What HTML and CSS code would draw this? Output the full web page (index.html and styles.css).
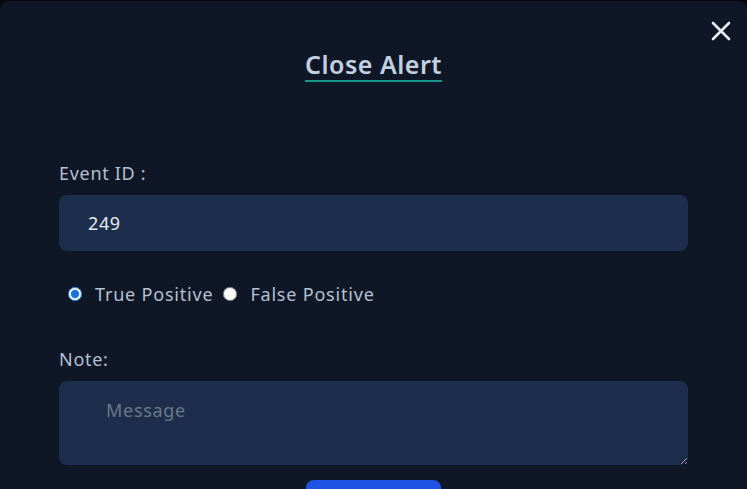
FILE: index.html
```html
<!DOCTYPE html>
<html>
<head>
<meta charset="utf-8">
<link rel="stylesheet" href="styles.css">
</head>
<body>
<div class="modal">
  <button class="close" aria-label="Close">
    <svg width="20" height="20" viewBox="0 0 20 20"><path d="M2 2 L18 18 M18 2 L2 18" stroke="#e8edf5" stroke-width="2.6" stroke-linecap="round"/></svg>
  </button>
  <h2 class="title"><span>Close Alert</span></h2>
  <form class="form">
    <label class="label">Event ID :</label>
    <input class="field" type="text" value="249">
    <div class="radios">
      <label class="radio"><input type="radio" name="r" checked> True Positive</label>
      <label class="radio"><input type="radio" name="r"> False Positive</label>
    </div>
    <label class="label note">Note:</label>
    <textarea class="area" placeholder="Message"></textarea>
    <div class="actions"><button type="button" class="submit">Submit</button></div>
  </form>
</div>
</body>
</html>
```
FILE: styles.css
```css
html, body { margin: 0; padding: 0; background: #05080f; height: 100%; overflow: hidden; }
body { font-family: "Noto Sans", "DejaVu Sans", sans-serif; }
.modal {
  position: relative;
  margin-top: 1px;
  background: #0f1727;
  border-radius: 9px 9px 0 0;
  height: 600px;
  padding: 0 59px;
}
.close {
  position: absolute; top: 20px; right: 16px;
  background: none; border: 0; padding: 0; width: 20px; height: 20px; cursor: pointer;
}
.title { margin: 0; padding-top: 46px; text-align: center; font-size: 25px; font-weight: 600; color: #c3d0e0; line-height: 34px; letter-spacing: 0.5px; }
.title span { display: inline-block; border-bottom: 2px solid #14968a; line-height: 32px; }
.form { display: flex; flex-direction: column; padding-top: 79px; }
.label { color: #b4c0d0; font-size: 18px; line-height: 24px; letter-spacing: 0.7px; }
.field {
  margin-top: 10px; height: 56px; box-sizing: border-box; border: 0; border-radius: 8px;
  background: #1c2e4b; color: #e6ebf2; font: 18px "Noto Sans", sans-serif; letter-spacing: 0.6px; padding: 0 29px; outline: none;
}
.radios { display: flex; gap: 10px; margin-top: 31px; padding-left: 9px; }
.radio { display: flex; align-items: center; color: #b4c0d0; font-size: 18px; line-height: 24px; gap: 13px; letter-spacing: 0.8px; }
.radio input { margin: 0; width: 14px; height: 14px; accent-color: #1a73e8; }
.note { margin-top: 41px; }
.area {
  margin-top: 10px; height: 84px; box-sizing: border-box; border: 0; border-radius: 8px;
  background: #1c2e4b; color: #e6ebf2; font: 18px "Noto Sans", sans-serif; letter-spacing: 0.7px; padding: 17px 47px; outline: none; resize: vertical;
}
.area::placeholder { color: #6b7888; }
.actions { display: flex; justify-content: center; margin-top: 15px; }
.submit { width: 135px; height: 44px; border: 0; border-radius: 8px; background: #1f55e5; color: #fff; font: 600 18px "Noto Sans", sans-serif; }
```
